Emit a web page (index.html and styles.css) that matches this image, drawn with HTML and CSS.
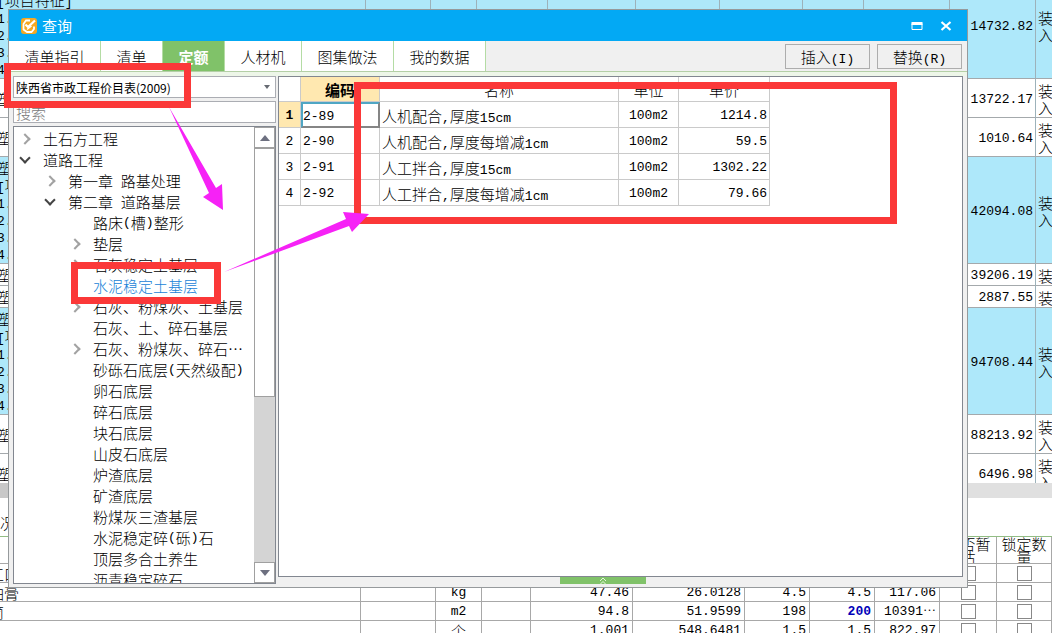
FILE: index.html
```html
<!DOCTYPE html>
<html lang="zh-CN">
<head>
<meta charset="utf-8">
<title>查询</title>
<link rel="stylesheet" href="styles.css">
</head>
<body>
<main class="workspace">
  <section class="bill">
    <table class="bill-table">
      <colgroup><col><col class="w65"><col class="w46"><col class="w71"><col class="w88"><col class="w84"><col class="w83"><col class="w61"><col class="w86"><col class="w86"><col class="w16"></colgroup>
      <tr class="tall"><td><div class="name">塑<br><span class="n">[</span>项目特征<span class="n">]</span><br><span class="n">1.</span><br><span class="n">2.</span><br><span class="n">3.</span><br><span class="n">4.</span></div></td><td></td><td></td><td></td><td></td><td></td><td></td><td></td><td></td><td class="num">14732.82</td><td class="kind">装<br>入</td></tr>
      <tr class="mid"><td><div class="name">塑</div></td><td></td><td></td><td></td><td></td><td></td><td></td><td></td><td></td><td class="num">13722.17</td><td class="kind">装<br>入</td></tr>
      <tr class="mid"><td><div class="name">塑</div></td><td></td><td></td><td></td><td></td><td></td><td></td><td></td><td></td><td class="num">1010.64</td><td class="kind">装<br>入</td></tr>
      <tr class="tall"><td><div class="name">塑<br><span class="n">[</span>项目特征<span class="n">]</span><br><span class="n">1.</span><br><span class="n">2.</span><br><span class="n">3.</span><br><span class="n">4.</span></div></td><td></td><td></td><td></td><td></td><td></td><td></td><td></td><td></td><td class="num">42094.08</td><td class="kind">装<br>入</td></tr>
      <tr class="short"><td><div class="name">塑</div></td><td></td><td></td><td></td><td></td><td></td><td></td><td></td><td></td><td class="num">39206.19</td><td class="kind">装</td></tr>
      <tr class="short"><td><div class="name">塑</div></td><td></td><td></td><td></td><td></td><td></td><td></td><td></td><td></td><td class="num">2887.55</td><td class="kind">装</td></tr>
      <tr class="tall"><td><div class="name">塑<br><span class="n">[</span>项目特征<span class="n">]</span><br><span class="n">1.</span><br><span class="n">2.</span><br><span class="n">3.</span><br><span class="n">4.</span></div></td><td></td><td></td><td></td><td></td><td></td><td></td><td></td><td></td><td class="num">94708.44</td><td class="kind">装<br>入</td></tr>
      <tr class="mid"><td><div class="name">塑</div></td><td></td><td></td><td></td><td></td><td></td><td></td><td></td><td></td><td class="num">88213.92</td><td class="kind">装<br>入</td></tr>
      <tr class="mid"><td><div class="name">塑</div></td><td></td><td></td><td></td><td></td><td></td><td></td><td></td><td></td><td class="num">6496.98</td><td class="kind">装<br>入</td></tr>
    </table>
  </section>
  <div class="hscroll"></div>
  <div class="detail-tabs">况</div>
  <section class="detail">
    <table class="detail-table">
      <colgroup><col><col class="w75"><col class="w46"><col class="w49"><col class="w102"><col class="w112"><col class="w65"><col class="w65"><col class="w65"><col class="w57"><col class="w55"></colgroup>
      <tr class="head"><th></th><th></th><th></th><th></th><th></th><th></th><th></th><th></th><th></th><th>是否暂估</th><th>锁定数量</th></tr>
      <tr><td>工口</td><td></td><td></td><td></td><td></td><td></td><td></td><td></td><td></td><td class="tick"><input type="checkbox" aria-label="是否暂估"></td><td class="tick"><input type="checkbox" aria-label="锁定数量"></td></tr>
      <tr><td>油膏</td><td></td><td class="unit n">kg</td><td></td><td class="num">47.46</td><td class="num">26.0128</td><td class="num">4.5</td><td class="num">4.5</td><td class="num">117.06</td><td class="tick"><input type="checkbox" aria-label="是否暂估"></td><td class="tick"><input type="checkbox" aria-label="锁定数量"></td></tr>
      <tr><td>筒</td><td></td><td class="unit n">m2</td><td></td><td class="num">94.8</td><td class="num">51.9599</td><td class="num">198</td><td class="num changed">200</td><td class="num">10391⋯</td><td class="tick"><input type="checkbox" aria-label="是否暂估"></td><td class="tick"><input type="checkbox" aria-label="锁定数量"></td></tr>
      <tr><td></td><td></td><td class="unit">个</td><td></td><td class="num">1.001</td><td class="num">548.6481</td><td class="num">1.5</td><td class="num">1.5</td><td class="num">822.97</td><td class="tick"><input type="checkbox" aria-label="是否暂估"></td><td class="tick"><input type="checkbox" aria-label="锁定数量"></td></tr>
    </table>
  </section>

  <div class="dialog" role="dialog" aria-labelledby="dialog-title">
    <header class="titlebar">
      <svg class="logo" viewBox="0 0 16 16"><rect width="16" height="16" rx="3" fill="#f6a821"/><path d="M9 2.500H5L2.500 6v5.500L6 14h4.500L13 11V8.500" fill="none" stroke="#fff" stroke-width="1.800"/><path d="M4.500 6.500 7 9l7-6.500" fill="none" stroke="#fff" stroke-width="2.200"/><path d="M6 11.500 10.500 8" stroke="#fff" stroke-width="1.500"/></svg>
      <h1 id="dialog-title">查询</h1>
      <button class="winbtn" aria-label="最大化"><svg viewBox="0 0 12 10"><path d="M1 2.500h10v6H1z" fill="none" stroke="#fff"/><path d="M.5 1h11v3H.5z" fill="#fff"/></svg></button>
      <button class="winbtn" aria-label="关闭"><svg viewBox="0 0 12 10"><path d="m1.500 1 9 8m0-8-9 8" fill="none" stroke="#fff" stroke-width="2.200"/></svg></button>
    </header>
    <nav class="tabs">
      <button class="tab w92">清单指引</button>
      <button class="tab w62">清单</button>
      <button class="tab w62 active">定额</button>
      <button class="tab w77">人材机</button>
      <button class="tab w92">图集做法</button>
      <button class="tab w92">我的数据</button>
      <span class="actions">
        <button class="action">插入<span class="n">(I)</span></button>
        <button class="action">替换<span class="n">(R)</span></button>
      </span>
    </nav>
    <div class="body">
      <div class="side">
        <div class="picker">
          <select aria-label="定额库"><option>陕西省市政工程价目表(2009)</option></select>
          <svg viewBox="0 0 6 4"><path d="M0 0h6L3 4z" fill="#666a72"/></svg>
        </div>
        <input class="search" type="text" placeholder="搜索" aria-label="搜索">
        <div class="tree">
          <ul>
            <li class="closed">土石方工程</li>
            <li class="open">道路工程</li>
            <li class="l1 closed">第一章<span class="n"> </span>路基处理</li>
            <li class="l1 open">第二章<span class="n"> </span>道路基层</li>
            <li class="l2">路床<span class="n">(</span>槽<span class="n">)</span>整形</li>
            <li class="l2 closed">垫层</li>
            <li class="l2 closed">石灰稳定土基层</li>
            <li class="l2 current">水泥稳定土基层</li>
            <li class="l2 closed">石灰、粉煤灰、土基层</li>
            <li class="l2">石灰、土、碎石基层</li>
            <li class="l2 closed">石灰、粉煤灰、碎石⋯</li>
            <li class="l2">砂砾石底层<span class="n">(</span>天然级配<span class="n">)</span></li>
            <li class="l2">卵石底层</li>
            <li class="l2">碎石底层</li>
            <li class="l2">块石底层</li>
            <li class="l2">山皮石底层</li>
            <li class="l2">炉渣底层</li>
            <li class="l2">矿渣底层</li>
            <li class="l2">粉煤灰三渣基层</li>
            <li class="l2">水泥稳定碎<span class="n">(</span>砾<span class="n">)</span>石</li>
            <li class="l2">顶层多合土养生</li>
            <li class="l2">沥青稳定碎石</li>
          </ul>
          <div class="vscroll">
            <button aria-label="向上滚动"><svg viewBox="0 0 10 6"><path d="M0 6h10L5 0z" fill="#6d7080"/></svg></button>
            <div class="thumb"></div>
            <div class="track"></div>
            <button aria-label="向下滚动"><svg viewBox="0 0 10 6"><path d="M0 0h10L5 6z" fill="#6d7080"/></svg></button>
          </div>
        </div>
      </div>
      <div class="content">
        <div class="sheet">
          <table class="quota">
            <colgroup><col class="w22"><col class="w79"><col class="w239"><col class="w60"><col class="w91"></colgroup>
            <tr><th></th><th class="hot">编码</th><th>名称</th><th>单位</th><th>单价</th></tr>
            <tr><td class="idx hot">1</td><td class="n picked">2-89</td><td>人机配合<span class="n">,</span>厚度<span class="n">15cm</span></td><td class="unit n">100m2</td><td class="num">1214.8</td></tr>
            <tr><td class="idx">2</td><td class="n">2-90</td><td>人机配合<span class="n">,</span>厚度每增减<span class="n">1cm</span></td><td class="unit n">100m2</td><td class="num">59.5</td></tr>
            <tr><td class="idx">3</td><td class="n">2-91</td><td>人工拌合<span class="n">,</span>厚度<span class="n">15cm</span></td><td class="unit n">100m2</td><td class="num">1302.22</td></tr>
            <tr><td class="idx">4</td><td class="n">2-92</td><td>人工拌合<span class="n">,</span>厚度每增减<span class="n">1cm</span></td><td class="unit n">100m2</td><td class="num">79.66</td></tr>
          </table>
        </div>
        <button class="expander" aria-label="展开"><svg viewBox="0 0 8 7"><path d="M1 4 4 1l3 3M1.500 7 4 4.500 6.500 7" fill="none" stroke="#e6f8dd"/></svg></button>
      </div>
    </div>
  </div>

  <div class="mark mark-library"></div>
  <div class="mark mark-result"></div>
  <div class="mark mark-node"></div>
  <svg class="arrows" width="400" height="300" viewBox="0 0 400 300"><path d="M169 107 216 188l6-4 1 26-20-13 6-4z" fill="#f622f6"/><path d="M224 272 346 219l-3-7 26 2-17 18-3-6z" fill="#f622f6"/></svg>
</main>
</body>
</html>
```

FILE: styles.css
```css
* , *::before { box-sizing: border-box; }
body {
  margin: 0;
  font-family: "Noto Sans CJK SC", sans-serif;
  font-size: 15px;
  font-weight: 300;
  line-height: 17px;
  color: #000;
}
button, input, select { font: inherit; color: inherit; margin: 0; }
button { padding: 0; border: 0; background: none; }
.n, .num { font-family: "Liberation Mono", "Noto Sans CJK SC", monospace; font-size: 13px; }
span.n { line-height: 0; }

.workspace {
  position: relative;
  display: flex;
  flex-direction: column;
  height: 100vh;
  overflow: hidden;
  background: #fff;
}
table { border-collapse: separate; border-spacing: 0; table-layout: fixed; }
td, th { padding: 0; overflow: hidden; white-space: nowrap; }
.num { text-align: right; }
.unit { text-align: center; }

/* Bill of quantities behind the dialog */
.bill { flex: none; height: 483px; overflow: hidden; display: flex; align-items: flex-end; }
.bill-table { width: 100%; flex: none; margin-bottom: -10px; }
.bill-table td { border-right: 1px solid #9db2ba; border-bottom: 1px solid #a4a9ac; }
.bill-table .name { margin-left: -3px; }
.bill-table td.num { padding: 2px 2px 0 0; }
.bill-table td.kind { padding: 2px 0 0 2px; border-right: 0; }
.tall { height: 107px; background: #aee8fa; }
.mid { height: 39px; }
.short { height: 22px; }
.hscroll { flex: none; height: 15px; background: linear-gradient(90deg, #c8c8c8 50%, #e0e0e0 50%); }
.detail-tabs {
  flex: none;
  height: 39px;
  padding: 8px 0;
  line-height: 34px;
  border-bottom: 1px solid #92bd84;
}
.detail { flex: 1; overflow: hidden; }
.detail-table { width: 100%; }
.detail-table tr { height: 19px; }
.detail-table .head { height: 27px; }
.detail-table td, .detail-table th { border-right: 1px solid #a8a8a8; border-bottom: 1px solid #a8a8a8; }
.detail-table th { white-space: normal; font-weight: 300; line-height: 13px; }
.detail-table td { padding-top: 2px; line-height: 16px; }
.detail-table td:first-child { text-indent: -11px; }
.detail-table td.num { padding-right: 3px; }
.detail-table .changed { color: #0000b8; font-weight: 700; }
.detail-table .tick { padding: 0; }
.tick input {
  appearance: none;
  display: block;
  width: 15px;
  height: 15px;
  margin: 0 auto;
  border: 1px solid #888;
  background: #fff;
}

.w16 { width: 16px; } .w22 { width: 22px; } .w46 { width: 46px; } .w49 { width: 49px; }
.w55 { width: 55px; } .w57 { width: 57px; } .w60 { width: 60px; } .w61 { width: 61px; }
.w62 { width: 62px; } .w65 { width: 65px; } .w71 { width: 71px; } .w75 { width: 75px; }
.w77 { width: 77px; } .w79 { width: 79px; } .w83 { width: 83px; } .w84 { width: 84px; }
.w86 { width: 86px; } .w88 { width: 88px; } .w91 { width: 91px; } .w92 { width: 92px; }
.w102 { width: 102px; } .w112 { width: 112px; } .w239 { width: 239px; }

/* Dialog window */
.dialog {
  position: absolute;
  inset: 9px 84px 45px 8px;
  display: flex;
  flex-direction: column;
  border: 1px solid #969a9c;
  background: #f0f0f0;
}
.titlebar {
  flex: none;
  display: flex;
  align-items: center;
  height: 31px;
  padding: 0 13px 0 12px;
  background: #03a9f4;
  color: #fff;
}
.logo { width: 16px; height: 16px; margin-right: 5px; }
.titlebar h1 { flex: 1; margin: 0; font-size: 15px; font-weight: 400; }
.winbtn { display: grid; place-items: center; width: 29px; height: 24px; }
.winbtn svg { width: 12px; height: 10px; }
.winbtn:last-child { width: 16px; margin-left: 7px; }
.tabs {
  flex: none;
  display: flex;
  height: 31px;
  border-bottom: 1px solid #b4cfa6;
}
.tab { background: #fff; border-right: 1px solid #b4dca4; padding-top: 1px; }
.tab.active { background: #80c269; color: #fff; font-weight: 700; }
.actions { display: flex; gap: 7px; margin-left: auto; padding: 3px 5px 2px 0; }
.action { width: 85px; border: 1px solid #adadad; }
.body { flex: 1; min-height: 0; display: flex; gap: 2px; padding: 4px 4px 3px 4px; background: linear-gradient(#edf6e8 4px, #f0f0f0 4px); }
.side { flex: none; width: 263px; display: flex; flex-direction: column; gap: 3px; }
.picker { display: grid; align-items: center; height: 22px; border: 1px solid #abadb3; background: #fff; }
.picker select {
  grid-area: 1 / 1;
  appearance: none;
  width: 100%;
  height: 20px;
  padding: 0 2px;
  border: 0;
  background: none;
  font-size: 12px;
  font-weight: 400;
}
.picker svg { grid-area: 1 / 1; justify-self: end; width: 6px; height: 4px; margin-right: 5px; pointer-events: none; }
.search { height: 22px; padding: 0 2px; border: 1px solid #abadb3; border-radius: 0; background: #fff; }
.search::placeholder { color: #777; }
.tree { flex: 1; min-height: 0; display: flex; border: 1px solid #828790; background: #fff; }
.tree ul { flex: 1; margin: 0; padding: 1px 0 0; list-style: none; overflow: hidden; }
.tree li { display: flex; align-items: center; height: 21px; padding-left: 5px; white-space: pre; }
.tree li::before { content: ""; flex: none; width: 8px; height: 8px; margin: 0 14px 0 2px; }
.tree .l1 { padding-left: 30px; }
.tree .l2 { padding-left: 55px; }
.tree .closed::before { border: solid #a2a2a2; border-width: 2px 2px 0 0; transform: rotate(45deg); }
.tree .open::before { margin-bottom: 4px; border: solid #444; border-width: 0 2px 2px 0; transform: rotate(45deg); }
.tree .current { color: #1883d7; }
.vscroll { flex: none; width: 21px; display: flex; flex-direction: column; background: #d4d4d4; }
.vscroll button { display: grid; place-items: center; height: 21px; border: 1px solid #a0a0a0; background: #fff; }
.vscroll svg { width: 10px; height: 6px; }
.thumb { flex: 3; border: 1px solid #a0a0a0; background: #fff; }
.track { flex: 2; }
.content { flex: 1; min-width: 0; display: flex; flex-direction: column; }
.sheet { flex: 1; border: 1px solid #828790; background: #fff; }
.expander { display: grid; place-items: center; width: 86px; height: 7px; margin-left: 282px; background: #80c269; }
.expander svg { width: 8px; height: 7px; }

.quota { width: 491px; }
.quota th { height: 25px; font-weight: 300; }
.quota td { height: 26px; padding: 2px 0 0 2px; }
.quota td, .quota th { border-right: 1px solid #cacaca; border-bottom: 1px solid #cacaca; }
.quota .idx { padding-left: 0; text-align: center; font-family: "Liberation Mono", monospace; font-size: 13px; }
.quota .unit { padding-left: 0; }
.quota .num { padding-right: 2px; }
.quota .hot { background: #ffe8b0; font-weight: 700; }
.quota .picked { border: 2px solid #858585; border-top-color: #4fa6c4; border-left-color: #4fa6c4; padding-left: 0; }

/* Callouts drawn over the windows */
.mark { position: absolute; border: 7px solid #fb3838; pointer-events: none; }
.mark-library { left: 4px; top: 63px; width: 187px; height: 45px; }
.mark-result { left: 354px; top: 82px; width: 543px; height: 142px; }
.mark-node { left: 71px; top: 262px; width: 150px; height: 42px; }
.arrows { position: absolute; left: 0; top: 0; pointer-events: none; }
```
